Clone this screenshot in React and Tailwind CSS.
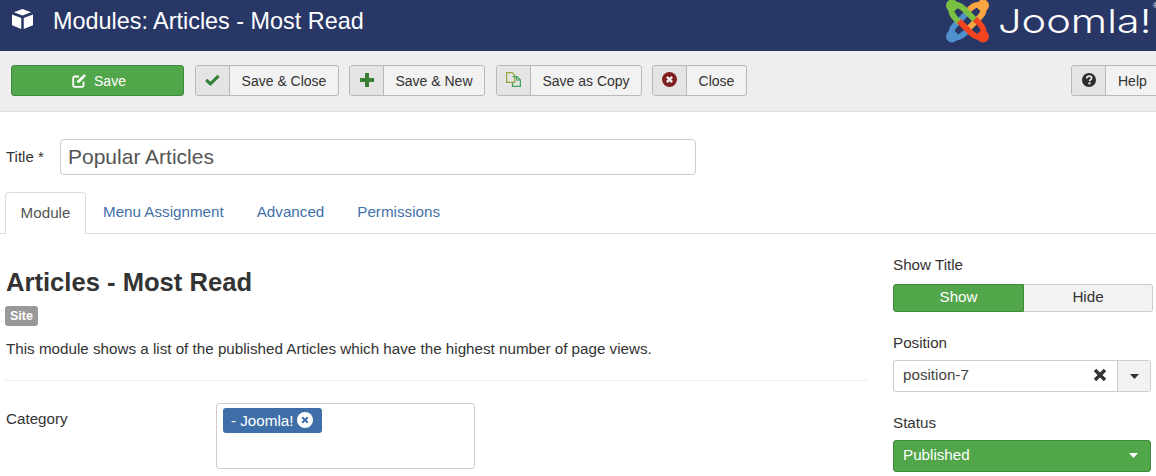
import React from 'react';

const Cube = () => (
  <svg width="21" height="22" viewBox="1 1.5 20 19.1" className="shrink-0 text-white">
    <path fill="currentColor" d="M11 1.5 L19.2 4.6 L11 7.8 L2.8 4.6 Z" />
    <path fill="currentColor" d="M1 6.8 L9.8 10.2 V20.6 L1 17 Z" />
    <path fill="currentColor" d="M21 6.8 L12.2 10.2 V20.6 L21 17 Z" />
  </svg>
);

// one hook of the mark, turned four times round the centre
const Hook = ({ color, turn }) => (
  <g transform={`rotate(${turn} 21.5 21)`} stroke={color} fill="none" strokeWidth="6">
    <path d="M6 5 C11 4 15 6 18 9 L30 21" />
    <path d="M6 5 C4 10 6 15 9 18 L14 23" />
    <circle cx="6" cy="5.5" r="3" fill={color} />
  </g>
);

const JoomlaMark = () => (
  <svg width="44" height="43" viewBox="0 0 44 43" className="shrink-0">
    <Hook color="#5091cd" turn={270} />
    <Hook color="#f9a541" turn={90} />
    <Hook color="#7ac143" turn={0} />
    <Hook color="#f44321" turn={180} />
  </svg>
);

const EditIcon = () => (
  <svg width="14" height="14" viewBox="0 0 14 14" fill="none" stroke="#fff" strokeWidth="1.8">
    <path d="M7 2.5 H2.5 A1.2 1.2 0 0 0 1.2 3.7 V11.5 A1.2 1.2 0 0 0 2.5 12.8 H10.3 A1.2 1.2 0 0 0 11.5 11.5 V7.5" />
    <path d="M5.2 6.8 L10.6 1.4 L12.6 3.4 L7.2 8.8 H5.2 Z" fill="#fff" stroke="none" />
    <path d="M11.4 .7 L13.3 2.6" />
  </svg>
);

const CheckIcon = () => (
  <svg width="15" height="12" viewBox="0 0 15 12" fill="none" stroke="#378137" strokeWidth="3.2">
    <path d="M1.2 5.8 L5.4 9.8 L13.6 1.8" />
  </svg>
);

const PlusIcon = () => (
  <svg width="14" height="14" viewBox="0 0 14 14" fill="#378137">
    <path d="M5 0 H9 V5 H14 V9 H9 V14 H5 V9 H0 V5 H5 Z" />
  </svg>
);

const CopyIcon = () => (
  <svg width="15" height="15" viewBox="0 0 15 15" fill="none" strokeWidth="1.2">
    <path stroke="#9aa23c" d="M.6 .6 H6 L8.6 3.2 V10.4 H.6 Z" />
    <path stroke="#3fa35a" d="M6.5 4.6 H11 L14.4 8 V14.4 H6.5 V10.4" />
    <path stroke="#3fa35a" d="M10.5 4.6 V8 H14.4" />
  </svg>
);

const XCircle = ({ size = 15, bg = '#7f1f1f', fg = '#eee', weight = 2.6 }) => (
  <svg width={size} height={size} viewBox="0 0 16 16" className="block">
    <circle cx="8" cy="8" r="8" fill={bg} />
    <path d="M5.2 5.2 L10.8 10.8 M10.8 5.2 L5.2 10.8" stroke={fg} strokeWidth={weight} />
  </svg>
);

const HelpIcon = () => (
  <svg width="14" height="14" viewBox="0 0 14 14">
    <circle cx="7" cy="7" r="7" fill="#2b2b2b" />
    <path d="M4.6 5.4 C4.8 3.8 5.9 3.1 7.2 3.1 C8.6 3.1 9.6 4 9.6 5.1 C9.6 6.6 7.6 6.7 7.6 8.2" fill="none" stroke="#eee" strokeWidth="1.7" />
    <rect x="6.4" y="9.4" width="2.2" height="1.9" fill="#eee" />
  </svg>
);

const Caret = ({ color = '#333' }) => (
  <svg width="9" height="5" viewBox="0 0 9 5">
    <path d="M0 0 H9 L4.5 5 Z" fill={color} />
  </svg>
);

const ToolButton = ({ icon, label, className = '' }) => (
  <button className={`flex h-[31px] shrink-0 items-stretch rounded-[3px] border border-[#b8b8b8] bg-[#f2f2f2] text-[14px] text-[#333] ${className}`}>
    <span className="flex w-[34px] shrink-0 items-center justify-center rounded-l-[3px] border-r border-[#b8b8b8] bg-[#e4e4e4] pb-[2px]">
      {icon}
    </span>
    <span className="flex flex-1 items-center justify-center whitespace-nowrap pt-[1px]">{label}</span>
  </button>
);

export default function App() {
  return (
    <div className="h-[476px] w-[1156px] overflow-hidden bg-white font-['Liberation_Sans',Arial,sans-serif] text-[15.2px] text-[#333]">
      <header className="flex h-[51px] items-start justify-between overflow-hidden bg-[#293766]">
        <div className="flex items-start pl-[12px] pt-[8px]">
          <Cube />
          <h1 className="ml-[20px] mt-[2px] text-[23.4px] leading-none text-white">Modules: Articles - Most Read</h1>
        </div>
        <div className="flex items-start">
          <JoomlaMark />
          <span className="ml-[8px] mt-[1px] w-[155px] origin-left scale-x-[1.26] font-['Inter',sans-serif] text-[33px] font-light leading-[40px] text-white">Joomla!</span>
          <span className="mt-[2px] w-[3px] text-[8px] leading-none text-white">®</span>
        </div>
      </header>

      <div className="flex h-[61px] items-start border-b border-[#ddd] bg-[#eee] pl-[11px] pt-[14px]">
        <button className="flex h-[31px] w-[173px] shrink-0 items-center justify-center gap-[8px] rounded-[3px] border border-[#3f8a3f] bg-[#51a64a] pl-[3px] text-[14px] text-white">
          <EditIcon />
          <span className="pt-[1px]">Save</span>
        </button>
        <ToolButton className="ml-[11px] w-[144px]" icon={<CheckIcon />} label="Save & Close" />
        <ToolButton className="ml-[10px] w-[136px]" icon={<PlusIcon />} label="Save & New" />
        <ToolButton className="ml-[11px] w-[146px]" icon={<CopyIcon />} label="Save as Copy" />
        <ToolButton className="ml-[10px] w-[95px]" icon={<XCircle />} label="Close" />
        <ToolButton className="ml-[324px] w-[95px] [&>span:last-child]:justify-start [&>span:last-child]:pl-[12px]" icon={<HelpIcon />} label="Help" />
      </div>

      <div className="flex items-center pl-[6px] pt-[27px]">
        <label className="w-[54px] text-[15px]">Title *</label>
        <div className="flex h-[36px] w-[636px] items-center rounded-[4px] border border-[#ccc] pl-[7px] text-[21px] text-[#555]">
          Popular Articles
        </div>
      </div>

      <nav className="mt-[17px] flex h-[42px] items-stretch border-b border-[#ddd] pl-[5px] text-[#3f6fa8]">
        <span className="mb-[-1px] flex w-[81px] items-center justify-center rounded-t-[4px] border border-b-0 border-[#ddd] bg-white text-[#555]">Module</span>
        <span className="ml-[17px] flex items-center">Menu Assignment</span>
        <span className="ml-[33px] flex items-center">Advanced</span>
        <span className="ml-[33px] flex items-center">Permissions</span>
      </nav>

      <main className="flex">
        <section className="w-[867px] shrink-0 pl-[5px]">
          <h2 className="mt-[33px] pl-[1px] text-[25.6px] font-bold leading-[30px]">Articles - Most Read</h2>
          <span className="mt-[9px] block h-[20px] w-[33px] rounded-[3px] bg-[#999] text-center text-[12.5px] font-bold leading-[20px] text-white">Site</span>
          <p className="mt-[13px] pl-[1px] leading-[20px]">This module shows a list of the published Articles which have the highest number of page views.</p>
          <hr className="mt-[21px] border-[#eee]" />
          <div className="mt-[22px] flex">
            <label className="w-[211px] pl-[1px] pt-[7px] leading-[18px]">Category</label>
            <div className="h-[66px] w-[259px] rounded-[3px] border border-[#ccc] pl-[6px] pt-[4px]">
              <span className="flex h-[25px] w-[99px] items-center rounded-[3px] bg-[#3f6fa8] pl-[8px] pt-[1px] text-white">
                - Joomla!
                <span className="mb-[3px] ml-[4px]"><XCircle size={16} bg="#fff" fg="#3f6fa8" weight={2} /></span>
              </span>
            </div>
          </div>
        </section>

        <aside className="ml-[26px] w-[263px] shrink-0 pt-[22px]">
          <label className="block leading-[18px]">Show Title</label>
          <div className="mt-[10px] flex h-[28px] w-[260px]">
            <span className="flex w-[131px] items-center justify-center rounded-l-[3px] border border-[#3f8a3f] bg-[#51a64a] pb-[1px] text-white">Show</span>
            <span className="flex flex-1 items-center justify-center rounded-r-[3px] border border-l-0 border-[#ccc] bg-[#f2f2f2] pb-[1px]">Hide</span>
          </div>
          <label className="mt-[22px] block leading-[18px]">Position</label>
          <div className="mt-[8px] flex h-[32px] w-[258px] rounded-[3px] border border-[#ccc]">
            <span className="flex flex-1 items-center justify-between pb-[2px] pl-[9px] pr-[10px] text-[#444]">
              position-7
              <svg width="14" height="14" viewBox="0 0 14 14"><path d="M2 2 L12 12 M12 2 L2 12" stroke="#333" strokeWidth="3.4" /></svg>
            </span>
            <span className="flex w-[33px] items-center justify-center rounded-r-[3px] border-l border-[#ccc] bg-[#f2f2f2]">
              <Caret />
            </span>
          </div>
          <label className="mt-[22px] block leading-[18px]">Status</label>
          <div className="mt-[8px] flex h-[32px] w-[258px] items-center justify-between rounded-[3px] border border-[#3f8a3f] bg-[#51a64a] pb-[1px] pl-[9px] pr-[12px] text-white">
            Published
            <Caret color="#fff" />
          </div>
        </aside>
      </main>
    </div>
  );
}
